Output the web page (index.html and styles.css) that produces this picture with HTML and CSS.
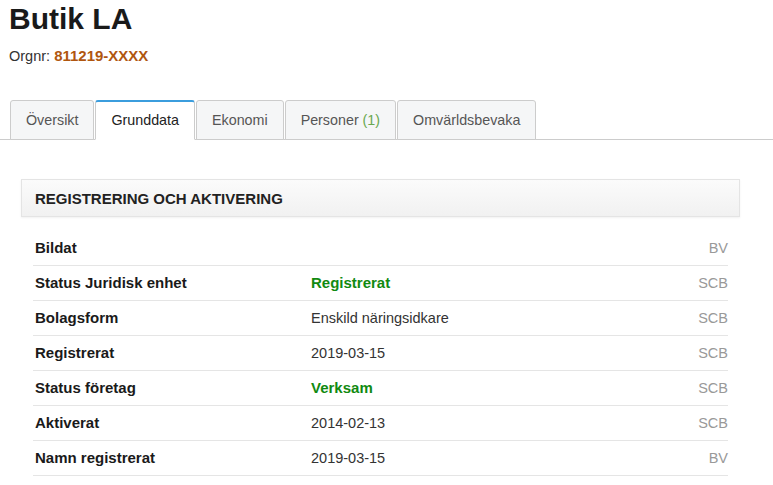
FILE: index.html
```html
<!DOCTYPE html>
<html lang="sv">
<head>
    <meta charset="UTF-8">
    <meta name="viewport" content="width=device-width, initial-scale=1.0">
    <title>Butik LA</title>
    <link rel="stylesheet" href="styles.css">
</head>
<body>

<div class="company">
    <h1 class="company-name">Butik LA</h1>
    <p class="orgnr">Orgnr: <span class="orgnr-value">811219-XXXX</span></p>
</div>

<ul class="tabs">
    <li class="tab">Översikt</li>
    <li class="tab active">Grunddata</li>
    <li class="tab">Ekonomi</li>
    <li class="tab">Personer <span class="count">(1)</span></li>
    <li class="tab">Omvärldsbevaka</li>
</ul>

<div class="panel">
    <div class="panel-heading">REGISTRERING OCH AKTIVERING</div>
    <div class="rows">
        <div class="row">
            <span class="label">Bildat</span>
            <span class="value"></span>
            <span class="source">BV</span>
        </div>
        <div class="row">
            <span class="label">Status Juridisk enhet</span>
            <span class="value ok">Registrerat</span>
            <span class="source">SCB</span>
        </div>
        <div class="row">
            <span class="label">Bolagsform</span>
            <span class="value">Enskild näringsidkare</span>
            <span class="source">SCB</span>
        </div>
        <div class="row">
            <span class="label">Registrerat</span>
            <span class="value">2019-03-15</span>
            <span class="source">SCB</span>
        </div>
        <div class="row">
            <span class="label">Status företag</span>
            <span class="value ok">Verksam</span>
            <span class="source">SCB</span>
        </div>
        <div class="row">
            <span class="label">Aktiverat</span>
            <span class="value">2014-02-13</span>
            <span class="source">SCB</span>
        </div>
        <div class="row">
            <span class="label">Namn registrerat</span>
            <span class="value">2019-03-15</span>
            <span class="source">BV</span>
        </div>
    </div>
</div>

</body>
</html>
```

FILE: styles.css
```css
* {
    margin: 0;
    padding: 0;
    box-sizing: border-box;
}

body {
    font-family: 'Liberation Sans', Arial, sans-serif;
    font-size: 14.5px;
    color: #222;
    background-color: #fff;
}

.company {
    padding: 2px 9px 0;
}

.company-name {
    font-size: 30px;
    font-weight: bold;
    line-height: 34px;
    color: #1a1a1a;
}

.orgnr {
    margin-top: 12px;
    line-height: 16px;
    color: #333;
}

.orgnr-value {
    font-weight: bold;
    font-size: 15px;
    color: #b0560f;
}

.tabs {
    list-style: none;
    display: flex;
    gap: 1px;
    margin-top: 36px;
    padding-left: 10px;
    border-bottom: 1px solid #ccc;
}

.tab {
    height: 40px;
    line-height: 38px;
    padding: 0 15px;
    margin-bottom: -1px;
    font-size: 14.3px;
    color: #555;
    background-color: #f5f6f7;
    border: 1px solid #ccc;
    border-radius: 3px 3px 0 0;
}

.tab.active {
    color: #222;
    background-color: #fff;
    border-top: 2px solid #3b9ddd;
    border-bottom-color: #fff;
    line-height: 37px;
}

.tab .count {
    color: #6aa84f;
}

.panel {
    margin: 39px 0 0 21px;
    width: 719px;
}

.panel-heading {
    height: 38px;
    line-height: 37px;
    padding: 0 13px;
    font-size: 15px;
    font-weight: bold;
    color: #222;
    background: linear-gradient(#fbfbfb, #f1f1f1);
    border: 1px solid #e4e4e4;
    box-shadow: 0 1px 2px rgba(0, 0, 0, 0.06);
}

.rows {
    margin: 14px 12px 0;
}

.row {
    display: grid;
    grid-template-columns: 276px 1fr auto;
    height: 35px;
    line-height: 34px;
    padding-left: 2px;
    border-bottom: 1px solid #e5e5e5;
}

.label {
    font-size: 15px;
    font-weight: bold;
    color: #1a1a1a;
}

.value {
    color: #333;
}

.value.ok {
    font-size: 15px;
    font-weight: bold;
    color: #118a11;
}

.source {
    color: #999;
    text-align: right;
}
```
